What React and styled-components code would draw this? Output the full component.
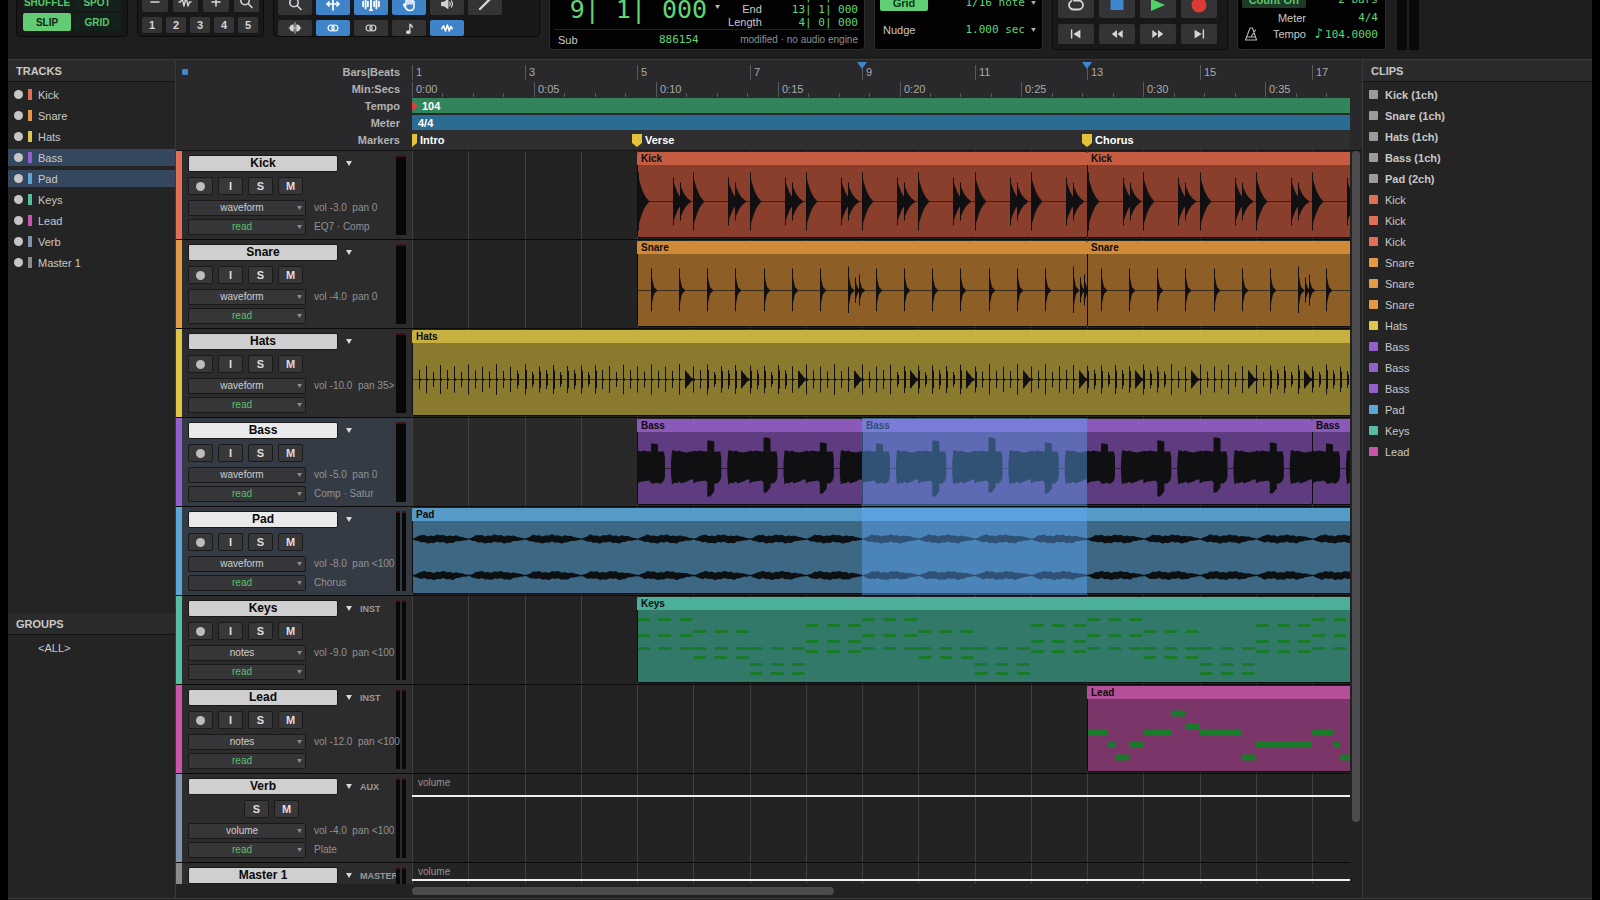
import React from 'react'
import styled, { createGlobalStyle, css } from 'styled-components'

const GlobalStyle = createGlobalStyle`
  * {
    box-sizing: border-box;
  }
  body {
    margin: 0;
    background: #000;
    color: #c8c8c8;
    font: 11px/16px 'Liberation Sans', Arial, sans-serif;
  }
  button, select {
    font: inherit;
    color: inherit;
    margin: 0;
    padding: 0;
    border: 0;
  }
  ul {
    list-style: none;
    margin: 0;
    padding: 0;
  }
  h2 {
    margin: 0;
  }
`

/* ---------- session data ---------- */

const BAR = 56.25
const SECOND = BAR / ((4 * 60) / 104)

const TRACKS = [
  { name: 'Kick', color: '#df6f55', view: 'waveform', vol: '-3.0', pan: '0', fx: 'EQ7 · Comp', mono: true },
  { name: 'Snare', color: '#e39a46', view: 'waveform', vol: '-4.0', pan: '0', mono: true },
  { name: 'Hats', color: '#ddc74b', view: 'waveform', vol: '-10.0', pan: '35>', mono: true },
  { name: 'Bass', color: '#935fce', view: 'waveform', vol: '-5.0', pan: '0', fx: 'Comp · Satur', mono: true, selected: true },
  { name: 'Pad', color: '#5da6d8', view: 'waveform', vol: '-8.0', pan: '<100', fx: 'Chorus', selected: true },
  { name: 'Keys', color: '#54bda3', view: 'notes', vol: '-9.0', pan: '<100', type: 'INST' },
  { name: 'Lead', color: '#c956ac', view: 'notes', vol: '-12.0', pan: '<100', type: 'INST' },
  { name: 'Verb', color: '#7f93ac', view: 'volume', vol: '-4.0', pan: '<100', fx: 'Plate', type: 'AUX', level: 21 },
  { name: 'Master 1', color: '#8b8b8b', view: 'volume', vol: '0.0', pan: '<100', type: 'MASTER', level: 16 }
]

const CLIPS = {
  Kick: [[4, 12], [12, 20]],
  Snare: [[4, 12], [12, 20]],
  Hats: [[0, 32]],
  Bass: [[4, 8], [8, 16], [16, 20]],
  Pad: [[0, 32]],
  Keys: [[4, 32]],
  Lead: [[12, 20]]
}

const CLIP_COLORS = {
  Kick: ['#c65d42', '#893f2c'],
  Snare: ['#d08a38', '#8d5e26'],
  Hats: ['#c6b140', '#897a2d'],
  Bass: ['#8a59ba', '#5f3c80'],
  Pad: ['#569bc8', '#3c6885'],
  Keys: ['#4baf99', '#33796a'],
  Lead: ['#b35099', '#7a3668']
}

const SELECTION = [8, 12]

const MARKERS = [
  { name: 'Intro', bar: 0 },
  { name: 'Verse', bar: 4 },
  { name: 'Chorus', bar: 12 }
]

const FILES = ['Kick (1ch)', 'Snare (1ch)', 'Hats (1ch)', 'Bass (1ch)', 'Pad (2ch)']
const REGIONS = [
  'Kick', 'Kick', 'Kick', 'Snare', 'Snare', 'Snare', 'Hats',
  'Bass', 'Bass', 'Bass', 'Pad', 'Keys', 'Lead'
]

const colorOf = name => TRACKS.find(t => t.name === name).color

/* ---------- clip drawings ---------- */

const BODY = 72
const MID = 36.5

// mirrored polygon from [x, up, down] samples
const shape = (points, mid = MID) =>
  'M' +
  points.map(([x, up]) => `${x.toFixed(1)} ${(mid - up).toFixed(1)}`).join('L') +
  'L' +
  [...points].reverse().map(([x, up, down = up]) => `${x.toFixed(1)} ${(mid + down).toFixed(1)}`).join('L') +
  'Z'

const kickHit = (x, amp) =>
  shape([[x, amp], [x + 1, amp], [x + 1, amp * 0.78], [x + 2, amp * 0.64], [x + 4, amp * 0.42], [x + 6, amp * 0.26], [x + 8, amp * 0.14], [x + 11, 0.5]])

const snareHit = (x, amp) =>
  shape([[x, amp, amp * 0.94], [x + 1, amp, amp * 0.94], [x + 1, amp * 0.6], [x + 2, amp * 0.36], [x + 3, amp * 0.16], [x + 6, 0.5]])

const kickPath = (start, end) => {
  let d = ''
  for (let bar = 0; bar < end - start; bar++) {
    const x = Math.round(bar * BAR) - (bar ? 1 : 0)
    d += kickHit(x, 29) + kickHit(x + 35, 24) + kickHit(x + 42, 19)
  }
  return d
}

const snarePath = (start, end) => {
  let d = ''
  for (let bar = 0; bar < end - start; bar++) {
    const x = bar * BAR - 1
    d += snareHit(Math.round(x + BAR * 0.25), 22) + snareHit(Math.round(x + BAR * 0.75), bar % 4 === 3 ? 24 : 22)
    if (bar % 4 === 3) {
      d += snareHit(Math.round(x + BAR * 0.88), 13) + snareHit(Math.round(x + BAR * 0.94), 16)
    }
  }
  return d
}

const hatsPath = (start, end) => {
  let d = ''
  for (let i = 1; i < (end - start) * 8; i++) {
    const x = Math.round((i * BAR) / 8) - 1
    const wide = ((i / 8) % 3.35) > 1.8
    const amp = (i % 2 ? 8.5 : 14) + Math.sin(i * 1.7) * 1.2
    if (i > 32 && i % 8 === 7) {
      d += shape([[x - 1, 9], [x, 9], [x + 1, 7], [x + 3, 5], [x + 5, 2], [x + 8, 0.5]])
    } else {
      d += shape([[x, amp], [x + 1, amp]])
      if (wide) d += shape([[x, amp * 0.7], [x + 2, amp * 0.6]])
      d += shape([[x, 2], [x + 2, 1]])
    }
  }
  return d
}

const bassPath = (start, end) => {
  const tops = [25, 28, 31, 26]
  const lows = [15, 28, 24, 25]
  let d = ''
  for (let bar = 0; bar < end - start; bar++) {
    const x = bar * BAR - 1
    const top = tops[bar % 4]
    const low = lows[bar % 4]
    d += shape([
      [x, 18, 15], [x + 4, 17, 13], [x + 6, 18, 13], [x + 12, 17, 12], [x + 14, 17, 14],
      [x + 14, top, low], [x + 17, top, low], [x + 21, top - 1, Math.max(low - 5, 14)],
      [x + 21, 17, 15], [x + 24, 17, 15], [x + 27, 17, 12], [x + 28, 10, 8]
    ])
    d += shape([
      [x + 34, 6, 6], [x + 35, 18, 16], [x + 38, 18, 14], [x + 39, 17, 15], [x + 43, 18, 13],
      [x + 44, 17, 15], [x + 50, 16, 13], [x + 54, 17, 11], [x + BAR, 17, 11], [x + BAR, 18, 15]
    ])
  }
  return d
}

const padPath = (start, end, mid) => {
  const points = []
  for (let x = 0; x < (end - start) * BAR; x++) {
    const t = (x % BAR) / BAR
    const env = Math.min(1, t * 7, (1 - t) * 3.4)
    const noise = Math.sin(x * 12.9 + mid) * 0.6 + Math.sin(x * 5.3) * 0.4
    points.push([x, 0.5 + env * (3.1 + noise), 0.5 + env * (3.1 - noise)])
  }
  return shape(points, mid)
}

// note heights, one chord per bar
const CHORDS = [[9, 25, 38], [21, 38, 47], [38, 54, 63], [15, 31, 41]]
// [bar offset, length, note height]
const LEAD = [
  [0, 0.375, 33], [0.375, 0.125, 45], [0.5, 0.25, 58], [0.75, 0.25, 45], [1, 0.5, 33],
  [1.5, 0.25, 14], [1.75, 0.25, 27], [2, 0.75, 33], [2.75, 0.25, 58], [3, 1, 45]
]

function Notes ({ name, bars }) {
  const notes = []
  for (let bar = 0; bar < bars; bar++) {
    if (name === 'Keys') {
      CHORDS[bar % 4].forEach(y =>
        [0, 0.375, 0.75].forEach(at => notes.push([bar + at, 0.235, y]))
      )
    } else if (bar % 4 === 0) {
      LEAD.forEach(([at, len, y]) => notes.push([bar + at, len, y]))
    }
  }
  const height = name === 'Keys' ? 3 : 6
  return notes.map(([at, len, y], i) => (
    <rect
      key={i}
      x={at * BAR - 1}
      y={y - height / 2 + 0.5}
      width={len * BAR}
      height={height}
      rx='1.5'
      fill='#187a2a'
    />
  ))
}

const PATHS = { Kick: kickPath, Snare: snarePath, Hats: hatsPath, Bass: bassPath }

function ClipDrawing ({ name, start, end }) {
  const width = (end - start) * BAR
  return (
    <svg width={width} height={BODY} aria-hidden='true'>
      {PATHS[name] && (
        <g fill='#101012'>
          <rect y='36' width={width} height='1' opacity='0.65' />
          <path d={PATHS[name](start, end)} />
        </g>
      )}
      {name === 'Pad' && (
        <path fill='#0d1013' d={padPath(start, end, 18) + padPath(start, end, 54.5)} />
      )}
      {(name === 'Keys' || name === 'Lead') && <Notes name={name} bars={end - start} />}
    </svg>
  )
}

/* ---------- icons ---------- */

const Svg = ({ size = 16, children, ...rest }) => (
  <svg
    width={size}
    height={size}
    viewBox='0 0 16 16'
    fill='none'
    stroke='currentColor'
    strokeWidth='1.6'
    strokeLinecap='round'
    strokeLinejoin='round'
    aria-hidden='true'
    {...rest}
  >
    {children}
  </svg>
)

const Caret = ({ size = 6 }) => (
  <svg width={size} height={size - 1} viewBox='0 0 6 5' fill='currentColor' aria-hidden='true'>
    <path d='M0 0h6L3 5z' />
  </svg>
)

const icons = {
  minus: <Svg><path d='M4 8h8' /></Svg>,
  plus: <Svg><path d='M4 8h8M8 4v8' /></Svg>,
  wave: <Svg strokeWidth='1.4'><path d='M2 8h1.5L5 4l2 8 2-9 2 9 1.5-4H14' /></Svg>,
  search: <Svg><circle cx='7' cy='6.5' r='4.2' /><path d='M10 9.5l4 4' /></Svg>,
  trim: <Svg strokeWidth='1.7'><path d='M2 8h12M8 2v12M4 6L2 8l2 2M12 6l2 2-2 2' /></Svg>,
  select: (
    <Svg size={18} strokeWidth='1.6'>
      <path d='M1 6v4M3.2 4v8M5.2 6v4M10.8 6v4M12.8 4v8M15 6v4M8 3v10M7 2.5h2M7 13.5h2' />
    </Svg>
  ),
  hand: (
    <Svg strokeWidth='1.5'>
      <path d='M5 9V4.5a1 1 0 0 1 2 0V8 3a1 1 0 0 1 2 0v5-4a1 1 0 0 1 2 0v4-2a1 1 0 0 1 2 0v4c0 2.5-1.5 4.5-4 4.5S5.5 13.5 4 11L2.8 9.3c-.4-1 .8-1.6 1.5-.8L5 9.5' />
    </Svg>
  ),
  speaker: (
    <Svg size={14} strokeWidth='1.3'>
      <path d='M2 6h3l4-3v10l-4-3H2z' fill='currentColor' />
      <path d='M11 6q1.5 2 0 4M13 4.5q2.5 3.5 0 7' />
    </Svg>
  ),
  pencil: <Svg strokeWidth='2.4'><path d='M3 13L13 3' /></Svg>,
  scrub: (
    <Svg size={14}>
      <path d='M6.5 4C3 4 2 6 2 8s1 4 4.5 4zM9.5 4C13 4 14 6 14 8s-1 4-4.5 4z' fill='currentColor' stroke='none' />
      <path d='M8 2v12M1 8h14' strokeWidth='1' />
    </Svg>
  ),
  link: <Svg size={12}><circle cx='5.5' cy='8' r='4' /><circle cx='10.5' cy='8' r='4' /></Svg>,
  note: (
    <Svg size={13} strokeWidth='1.6'>
      <ellipse cx='6.5' cy='12.5' rx='2' ry='1.5' fill='currentColor' />
      <path d='M8.5 12.5v-10c1 2 3 1.5 3 4' />
    </Svg>
  ),
  zigzag: <Svg size={12} strokeWidth='2'><path d='M1 9l2.5-4L6 12l2.5-8L11 12l2-6 2 3' /></Svg>,
  loop: <Svg strokeWidth='1.8'><path d='M6 3.5h4.500a4.5 4.5 0 0 1 0 9h-5a4.5 4.5 0 0 1-2-8.500' /></Svg>,
  stop: <Svg><rect x='1.5' y='3' width='13' height='10' rx='1' fill='#3f86cc' stroke='none' /></Svg>,
  play: <Svg><path d='M1 2l14 6-14 6z' fill='#4fd268' stroke='none' /></Svg>,
  record: <Svg><circle cx='8' cy='8' r='7.5' fill='#dc3a36' stroke='none' /></Svg>,
  start: <Svg size={14}><path d='M3 3.5v9' /><path d='M13 3v10L5 8z' fill='currentColor' stroke='none' /></Svg>,
  rewind: <Svg size={14}><path d='M8 3.5v9L2 8zM14.5 3.5v9L8.5 8z' fill='currentColor' stroke='none' /></Svg>,
  forward: <Svg size={14}><path d='M8 3.5v9L14 8zM1.5 3.5v9l6-4.5z' fill='currentColor' stroke='none' /></Svg>,
  end: <Svg size={14}><path d='M13 3.5v9' /><path d='M3 3v10l8-5z' fill='currentColor' stroke='none' /></Svg>,
  metronome: <Svg strokeWidth='1.1' stroke='#b5b5b5'><path d='M6 2h2.5l4 12h-11zM3 11h8M7 11l4.5-7' /></Svg>
}

/* ---------- toolbar ---------- */

const Shell = styled.div`
  display: flex;
  flex-direction: column;
  height: 100vh;
  border: solid #000;
  border-width: 0 8px;
  background: #1e1e1e;
  overflow: hidden;
`

const Toolbar = styled.header`
  display: flex;
  align-items: flex-end;
  gap: 9px;
  flex: none;
  height: 60px;
  padding: 0 8px 9px;
  border-bottom: 1px solid #3a3a37;
  overflow: hidden;
`

const ToolGroups = styled.div`
  display: flex;
  align-items: flex-end;
  gap: 9px;
  padding-bottom: 13px;
`

const Panel = styled.div`
  flex: none;
  display: flex;
  flex-direction: column;
  gap: ${p => p.$gap || 0}px;
  width: ${p => p.$width}px;
  padding: ${p => p.$pad};
  border: 1px solid ${p => (p.$lcd ? '#2b2b2b' : '#0b0b0b')};
  border-radius: 4px;
  background: ${p => (p.$lcd ? '#020202' : '#181818')};
`

const PanelRow = styled.div`
  display: flex;
  gap: ${p => p.$gap}px;
`

const ModeGrid = styled.div`
  display: grid;
  grid-template-columns: 1fr 1fr;
  gap: 2px;
`

const ModeButton = styled.button`
  height: 18px;
  padding-top: 1px;
  border-radius: 2px;
  font-size: 10px;
  font-weight: bold;
  color: ${p => (p.$on ? '#0d2613' : '#5bc66e')};
  background: ${p => (p.$on ? '#62cb75' : '#14211a')};
`

const ToolButton = styled.button`
  display: flex;
  align-items: center;
  justify-content: center;
  width: ${p => p.$width}px;
  height: ${p => p.$height}px;
  border-radius: 2px;
  font-weight: bold;
  color: ${p => (p.$on ? '#fff' : '#d6d6d6')};
  background: ${p => (p.$on ? '#3f83c9' : '#343436')};
`

const mono = css`
  font-family: 'DejaVu Sans Mono', 'Liberation Mono', monospace;
  color: #5fd673;
  white-space: pre;
`

const Value = styled.span`
  ${mono}
`

const NoteValue = styled.span`
  font-size: 14px;
  padding-right: 2px;
`

const CounterMain = styled.div`
  display: flex;
  align-items: flex-end;
  justify-content: flex-end;
  gap: 8px;
  padding-right: 2px;
`

const BigCounter = styled.div`
  ${mono}
  display: flex;
  gap: 16px;
  padding-bottom: 4px;
  font-size: 25px;
  line-height: 30px;
`

const CounterMenu = styled.button`
  display: flex;
  height: 24px;
  background: none;
  color: #bbb;
`

const CounterTable = styled.dl`
  display: grid;
  grid-template-columns: auto auto;
  column-gap: 30px;
  margin: 0;
  line-height: 13px;
  text-align: right;

  dd {
    margin: 0;
  }
`

const CounterFoot = styled.div`
  display: grid;
  grid-template-columns: 101px auto 1fr;
  align-items: center;
  height: 20px;
  padding: 0 2px 0 4px;
  border-top: 1px solid #232323;
`

const Status = styled.span`
  font-size: 10px;
  color: #8f8f8f;
  text-align: right;
  white-space: nowrap;
`

const GridRow = styled.div`
  display: flex;
  align-items: center;
  justify-content: space-between;
  height: ${p => p.$height}px;
`

const LcdButton = styled.button`
  width: ${p => p.$width}px;
  height: 16px;
  border-radius: 2px;
  font-weight: bold;
  color: ${p => (p.$on ? '#0d3a18' : '#5bc66e')};
  background: ${p => (p.$on ? '#5fce74' : '#1f3a26')};
`

const ValueMenu = styled.button`
  ${mono}
  display: flex;
  align-items: center;
  gap: 6px;
  background: none;

  svg {
    color: #aaa;
  }
`

const LcdLabel = styled.span`
  padding-left: ${p => p.$indent || 0}px;
`

const TempoLabel = styled.span`
  display: flex;
  align-items: center;
  justify-content: ${p => (p.$end ? 'flex-end' : 'space-between')};
  width: 64px;
  padding-left: 2px;
`

const OutputMeters = styled.div`
  display: flex;
  gap: 2px;
  padding-left: 2px;
`

const OutputMeter = styled.div`
  width: 10px;
  height: 70px;
  background: #090909;
`

function TopBar () {
  return (
    <Toolbar>
      <ToolGroups>
        <Panel $width={112} $pad='5px 6px'>
          <ModeGrid>
            <ModeButton>SHUFFLE</ModeButton>
            <ModeButton>SPOT</ModeButton>
            <ModeButton $on>SLIP</ModeButton>
            <ModeButton>GRID</ModeButton>
          </ModeGrid>
        </Panel>
        <Panel $gap={5} $width={127} $pad='3px 4px'>
          <PanelRow $gap={5}>
            {['minus', 'wave', 'plus', 'search'].map(icon => (
              <ToolButton key={icon} $width={26} $height={20} aria-label={icon}>
                {icons[icon]}
              </ToolButton>
            ))}
          </PanelRow>
          <PanelRow $gap={4}>
            {[1, 2, 3, 4, 5].map(n => (
              <ToolButton key={n} $width={20} $height={16}>{n}</ToolButton>
            ))}
          </PanelRow>
        </Panel>
        <Panel $gap={5} $width={267} $pad='3px 4px 0'>
          <PanelRow $gap={4}>
            {['search', 'trim', 'select', 'hand', 'speaker', 'pencil'].map((icon, i) => (
              <ToolButton key={icon} $width={34} $height={22} $on={i > 0 && i < 4} aria-label={icon}>
                {icons[icon]}
              </ToolButton>
            ))}
          </PanelRow>
          <PanelRow $gap={4}>
            {['scrub', 'link', 'link', 'note', 'zigzag'].map((icon, i) => (
              <ToolButton key={i} $width={34} $height={16} $on={i === 1 || i === 4} aria-label={icon}>
                {icons[icon]}
              </ToolButton>
            ))}
          </PanelRow>
        </Panel>
      </ToolGroups>

      <Panel $lcd $width={316} $pad='0 4px'>
        <CounterMain>
          <BigCounter>
            <span>9|</span>
            <span>1|</span>
            <span>000</span>
          </BigCounter>
          <CounterMenu aria-label='Counter format'><Caret size={5} /></CounterMenu>
          <CounterTable>
            <dt>Start</dt>
            <dd><Value>{' 9| 1| 000'}</Value></dd>
            <dt>End</dt>
            <dd><Value>13| 1| 000</Value></dd>
            <dt>Length</dt>
            <dd><Value>{' 4| 0| 000'}</Value></dd>
          </CounterTable>
        </CounterMain>
        <CounterFoot>
          <span>Sub</span>
          <Value>886154</Value>
          <Status>modified · no audio engine</Status>
        </CounterFoot>
      </Panel>

      <Panel $lcd $gap={9} $width={169} $pad='4px 6px 10px 5px'>
        <GridRow $height={18}>
          <LcdButton $on $width={48}>Grid</LcdButton>
          <ValueMenu>1/16 note<Caret size={5} /></ValueMenu>
        </GridRow>
        <GridRow $height={18}>
          <LcdLabel $indent={3}>Nudge</LcdLabel>
          <ValueMenu>1.000 sec<Caret size={5} /></ValueMenu>
        </GridRow>
      </Panel>

      <Panel $gap={6} $width={176} $pad='5px'>
        <PanelRow $gap={5}>
          {['loop', 'stop', 'play', 'record'].map(icon => (
            <ToolButton key={icon} $width={36} $height={26} aria-label={icon}>{icons[icon]}</ToolButton>
          ))}
        </PanelRow>
        <PanelRow $gap={5}>
          {['start', 'rewind', 'forward', 'end'].map(icon => (
            <ToolButton key={icon} $width={36} $height={20} aria-label={icon}>{icons[icon]}</ToolButton>
          ))}
        </PanelRow>
      </Panel>

      <Panel $lcd $width={149} $pad='4px 7px 7px 4px'>
        <GridRow $height={20}>
          <LcdButton $width={64}>Count Off</LcdButton>
          <Value>2 bars</Value>
        </GridRow>
        <GridRow $height={16}>
          <TempoLabel $end>Meter</TempoLabel>
          <Value>4/4</Value>
        </GridRow>
        <GridRow $height={16}>
          <TempoLabel>{icons.metronome}Tempo</TempoLabel>
          <Value><NoteValue>♪</NoteValue>104.0000</Value>
        </GridRow>
      </Panel>

      <OutputMeters>
        <OutputMeter />
        <OutputMeter />
      </OutputMeters>
    </Toolbar>
  )
}

/* ---------- side lists ---------- */

const Main = styled.main`
  display: flex;
  flex: 1;
  min-height: 0;
`

const Side = styled.aside`
  flex: none;
  display: flex;
  flex-direction: column;
  width: ${p => p.$width}px;
  border: solid #3a3a3a;
  border-width: ${p => (p.$right ? '0 0 0 1px' : '0 1px 0 0')};
  background: #242425;
`

const SideSection = styled.section`
  flex: ${p => p.$grow} 1 0;
`

const SideTitle = styled.h2`
  height: 22px;
  padding-left: 8px;
  border-bottom: 1px solid #141414;
  background: #2b2b2c;
  font-size: 11px;
  line-height: 22px;
`

const List = styled.ul`
  display: flex;
  flex-direction: column;
  gap: 4px;
  padding-top: 4px;
`

const ListRow = styled.li`
  display: flex;
  align-items: center;
  height: 17px;
  padding-left: ${p => p.$indent || 6}px;
  background: ${p => (p.$selected ? '#34475f' : 'none')};
  font-weight: ${p => (p.$bold ? 'bold' : 'normal')};
`

const Dot = styled.button`
  width: 9px;
  height: 9px;
  margin-right: 5px;
  border-radius: 50%;
  background: #c6c6c6;
`

const Stripe = styled.span`
  width: 4px;
  height: 11px;
  margin-right: 6px;
  background: ${p => p.$color};
`

const Chip = styled.span`
  width: 9px;
  height: 9px;
  margin-right: 7px;
  border-radius: 1px;
  background: ${p => p.$color};
`

const Footer = styled.footer`
  flex: none;
  height: 2px;
  border-top: 1px solid #3a3a3a;
`

/* ---------- rulers ---------- */

const Edit = styled.section`
  flex: 1;
  min-width: 0;
  display: flex;
  flex-direction: column;
  background: #222223;
`

const Rulers = styled.div`
  flex: none;
  display: grid;
  grid-template-columns: 236px 1fr;
  padding: 4px 12px 1px 0;
  border-bottom: 1px solid #141414;
  background: #29292b;
`

const RulerNames = styled.div`
  display: grid;
  grid-template-columns: 1fr auto;
  padding: 0 12px 0 6px;
  font-weight: bold;
  line-height: 17px;
  color: #b2b2b2;
  text-align: right;
`

const LinkSwitch = styled.button`
  width: 6px;
  height: 6px;
  margin-top: 5px;
  border-radius: 1px;
  background: #3f83c9;
`

const RulerLabels = styled.div`
  display: flex;
  flex-direction: column;
`

const Timelines = styled.div`
  min-width: 0;
  overflow: hidden;
`

const Ruler = styled.div`
  position: relative;
  height: 17px;
  color: #fff;
  font-weight: bold;
  background: ${p => p.$fill || 'none'};
`

const RulerBar = styled(Ruler)`
  height: 15px;
  margin-bottom: ${p => (p.$last ? 0 : 2)}px;
  padding-left: ${p => p.$indent}px;
  line-height: 16px;
`

const MarkerRuler = styled(Ruler)`
  height: 19px;
  padding-top: 2px;
`

const Tick = styled.span`
  position: absolute;
  bottom: 1px;
  height: ${p => (p.$minor ? 4 : 15)}px;
  padding-left: 3px;
  border-left: 1px solid #5a5a5a;
  line-height: 14px;
  font-weight: normal;
  color: #a9a9a9;
`

const LoopRow = styled.div`
  position: relative;
  height: 0;
  margin: 0 12px 0 236px;
`

const LoopFlag = styled.svg`
  position: absolute;
  z-index: 1;
  top: 2px;
  margin-left: -5px;
`

const Marker = styled.span`
  position: absolute;
  display: flex;
  align-items: center;
  gap: 3px;
  height: 16px;
  margin-left: -5px;
`

const TempoEvent = styled.svg`
  position: absolute;
  left: 0;
  top: 3px;
`

const at = bar => ({ left: Math.round(bar * BAR) })
const bars = Array.from({ length: 40 }, (_, i) => i)
const quarters = Array.from({ length: 80 }, (_, i) => i)

const clock = seconds =>
  `${Math.floor(seconds / 60)}:${String(seconds % 60).padStart(2, '0')}`

function RulerArea () {
  return (
    <Rulers>
      <RulerNames>
        <LinkSwitch aria-label='Link timeline' />
        <RulerLabels>
          {['Bars|Beats', 'Min:Secs', 'Tempo', 'Meter', 'Markers'].map(name => (
            <span key={name}>{name}</span>
          ))}
        </RulerLabels>
      </RulerNames>
      <Timelines>
        <Ruler>
          {bars.filter(b => b % 2 === 0).map(b => (
            <Tick key={b} style={at(b)}>{b + 1}</Tick>
          ))}
        </Ruler>
        <Ruler>
          {quarters.map(i => (
            <Tick key={i} $minor={i % 4 !== 0} style={{ left: Math.round(i * 1.25 * SECOND) }}>
              {i % 4 === 0 && clock(i * 1.25)}
            </Tick>
          ))}
        </Ruler>
        <RulerBar $fill='#32855a' $indent={10}>
          <TempoEvent width='6' height='10' aria-hidden='true'>
            <path d='M0 0l6 5-6 5z' fill='#dc3f38' />
          </TempoEvent>
          104
        </RulerBar>
        <RulerBar $fill='#2b6c92' $indent={6} $last>4/4</RulerBar>
        <MarkerRuler $fill='#2f2f31'>
          {MARKERS.map(marker => (
            <Marker key={marker.name} style={at(marker.bar)}>
              <svg width='10' height='13' aria-hidden='true'>
                <path d='M0 0h10v9l-5 4-5-4z' fill='#e3c33c' />
              </svg>
              {marker.name}
            </Marker>
          ))}
        </MarkerRuler>
      </Timelines>
    </Rulers>
  )
}

/* ---------- tracks ---------- */

const TrackArea = styled.div`
  flex: 1;
  min-height: 0;
  display: flex;
`

const TrackRows = styled.div`
  flex: 1;
  min-width: 0;
  overflow: hidden;
`

const Track = styled.div`
  display: grid;
  grid-template-columns: 6px 230px 1fr;
  grid-template-rows: 88px;
  border-bottom: 1px solid #0a0a0a;
`

const Strip = styled.div`
  background: ${p => p.$color};
`

const TrackHead = styled.div`
  display: flex;
  padding: 4px 6px 0;
  background: ${p => (p.$selected ? '#343b45' : '#2c2c2d')};
`

const Controls = styled.div`
  flex: 1;
  min-width: 0;
  display: flex;
  flex-direction: column;
`

const NameRow = styled.div`
  flex: none;
  display: flex;
  align-items: center;
  height: 17px;
  overflow: hidden;
  font-size: 9px;
  font-weight: bold;
  color: #999;
`

const Name = styled.button`
  flex: none;
  width: 150px;
  height: 17px;
  border: 1px solid #1a1a1a;
  border-radius: 2px;
  background: ${p => (p.$selected ? '#e9e9e9' : '#cfcfcf')};
  font-size: 12px;
  font-weight: bold;
  line-height: 15px;
  color: #0a0a0a;
`

const NameMenu = styled.button`
  flex: none;
  display: flex;
  justify-content: center;
  width: 22px;
  background: none;
  color: #d8d8d8;
`

const ButtonRow = styled.div`
  display: flex;
  gap: 5px;
  padding: 5px 0;
  padding-left: ${p => (p.$bus ? 56 : 0)}px;
`

const TrackButton = styled.button`
  display: flex;
  align-items: center;
  justify-content: center;
  width: 25px;
  height: 18px;
  border: 1px solid #1a1a1a;
  border-radius: 2px;
  background: #38383a;
  font-weight: bold;
  color: #dedede;
`

const RecordDot = styled.span`
  width: 9px;
  height: 9px;
  border-radius: 50%;
  background: #bdbdbd;
`

const OptionRow = styled.div`
  flex: none;
  display: flex;
  align-items: flex-start;
  gap: 8px;
  height: 19px;
  font-size: 10px;
  white-space: pre;
  color: #929292;
`

const SelectBox = styled.label`
  flex: none;
  position: relative;
  width: 118px;
  height: 16px;

  svg {
    position: absolute;
    right: 4px;
    top: 6px;
    color: #8e8e8e;
    pointer-events: none;
  }
`

const Select = styled.select`
  appearance: none;
  display: block;
  width: 100%;
  height: 16px;
  padding-right: 10px;
  border: 1px solid #191919;
  border-radius: 2px;
  background: #363638;
  line-height: 14px;
  text-align: center;
  text-align-last: center;
  color: ${p => (p.$green ? '#5bc06c' : '#cfcfcf')};
`

const Info = styled.span`
  z-index: 1;
`

const Meter = styled.div`
  display: flex;
  gap: 2px;
  flex: none;
  width: 10px;
  height: 80px;
`

const Channel = styled.div`
  flex: 1;
  border-top: 2px solid #3e1517;
  background: #080808;
`

const Lane = styled.div`
  position: relative;
  overflow: hidden;
  background: ${p => (p.$selected ? '#29292a' : '#232324')};
`

const GridLines = styled.svg`
  display: block;
`

const Clip = styled.div`
  position: absolute;
  top: 1px;
  border-bottom: 1px solid #0d0d0d;
  border-radius: 2px;
  overflow: hidden;
  background: ${p => p.$colors[1]};
`

const ClipTitle = styled.div`
  height: 13px;
  padding-left: 4px;
  background: ${p => p.$color};
  font-size: 10px;
  font-weight: bold;
  line-height: 14px;
  color: #0c0c0c;
`

const ClipBody = styled.div`
  height: 72px;
  border-left: 1px solid #0d0d0d;
`

const Selection = styled.div`
  position: absolute;
  top: 0;
  bottom: 0;
  background: rgba(96, 172, 255, 0.42);
`

const Automation = styled.div`
  position: absolute;
  inset: 0 0 auto;
  height: ${p => p.$level + 2}px;
  padding: 1px 6px;
  border-bottom: 2px solid #efefef;
  font-size: 10px;
  color: #939393;
`

function TrackRow ({ track }) {
  const { name, color, view, vol, pan, fx, type, selected, level } = track
  const bus = level !== undefined
  return (
    <Track>
      <Strip $color={color} />
      <TrackHead $selected={selected}>
        <Controls>
          <NameRow>
            <Name $selected={selected}>{name}</Name>
            <NameMenu aria-label={`${name} menu`}><Caret size={6} /></NameMenu>
            {type}
          </NameRow>
          <ButtonRow $bus={bus}>
            {!bus && <TrackButton aria-label='Record'><RecordDot /></TrackButton>}
            {!bus && <TrackButton>I</TrackButton>}
            <TrackButton>S</TrackButton>
            <TrackButton>M</TrackButton>
          </ButtonRow>
          <OptionRow>
            <SelectBox>
              <Select aria-label={`${name} view`} defaultValue={view}>
                <option>{view}</option>
              </Select>
              <Caret size={5} />
            </SelectBox>
            <Info>{`vol ${vol}  pan ${pan}`}</Info>
          </OptionRow>
          <OptionRow>
            <SelectBox>
              <Select $green aria-label={`${name} automation`} defaultValue='read'>
                <option>read</option>
              </Select>
              <Caret size={5} />
            </SelectBox>
            <Info>{fx}</Info>
          </OptionRow>
        </Controls>
        <Meter>
          <Channel />
          {!track.mono && <Channel />}
        </Meter>
      </TrackHead>
      <Lane $selected={name === 'Bass'}>
        <GridLines width='100%' height='88' aria-hidden='true'>
          {bars.map(b => (
            <rect key={b} x={Math.round(b * BAR)} width='1' height='88' fill='#404041' />
          ))}
        </GridLines>
        {(CLIPS[name] || []).map(([start, end]) => (
          <Clip
            key={start}
            $colors={CLIP_COLORS[name]}
            style={{ ...at(start), width: Math.round(end * BAR) - Math.round(start * BAR) }}
          >
            <ClipTitle $color={CLIP_COLORS[name][0]}>{name}</ClipTitle>
            <ClipBody><ClipDrawing name={name} start={start} end={end} /></ClipBody>
          </Clip>
        ))}
        {bus && <Automation $level={level}>volume</Automation>}
        {selected && (
          <Selection style={{ ...at(SELECTION[0]), width: (SELECTION[1] - SELECTION[0]) * BAR }} />
        )}
      </Lane>
    </Track>
  )
}

const VerticalScroll = styled.div`
  flex: none;
  width: 12px;
  padding: 0 2px;
`

const HorizontalScroll = styled.div`
  flex: none;
  height: 14px;
  padding: 3px 12px 3px 236px;
`

const Thumb = styled.div`
  width: ${p => p.$width || '100%'};
  height: ${p => p.$height || '8px'};
  border-radius: 4px;
  background: #4c4c4e;
`

export default function App () {
  return (
    <Shell>
      <GlobalStyle />
      <TopBar />
      <Main>
        <Side $width={168}>
          <SideSection $grow={33}>
            <SideTitle>TRACKS</SideTitle>
            <List>
              {TRACKS.map(t => (
                <ListRow key={t.name} $selected={t.selected}>
                  <Dot aria-label={`Show ${t.name}`} />
                  <Stripe $color={t.color} />
                  {t.name}
                </ListRow>
              ))}
            </List>
          </SideSection>
          <SideSection $grow={17}>
            <SideTitle>GROUPS</SideTitle>
            <List>
              <ListRow $indent={30}>&lt;ALL&gt;</ListRow>
            </List>
          </SideSection>
        </Side>

        <Edit>
          <LoopRow>
            {SELECTION.map(bar => (
              <LoopFlag key={bar} width='10' height='7' style={at(bar)} aria-hidden='true'>
                <path d='M0 0h10L5 7z' fill='#3f86cc' />
              </LoopFlag>
            ))}
          </LoopRow>
          <RulerArea />
          <TrackArea>
            <TrackRows>
              {TRACKS.map(track => <TrackRow key={track.name} track={track} />)}
            </TrackRows>
            <VerticalScroll>
              <Thumb $height='91.5%' />
            </VerticalScroll>
          </TrackArea>
          <HorizontalScroll>
            <Thumb $width='45%' />
          </HorizontalScroll>
        </Edit>

        <Side $width={230} $right>
          <SideTitle>CLIPS</SideTitle>
          <List>
            {FILES.map(name => (
              <ListRow key={name} $bold>
                <Chip $color='#9b9b9b' />
                {name}
              </ListRow>
            ))}
            {REGIONS.map((name, i) => (
              <ListRow key={i}>
                <Chip $color={colorOf(name)} />
                {name}
              </ListRow>
            ))}
          </List>
        </Side>
      </Main>
      <Footer />
    </Shell>
  )
}
